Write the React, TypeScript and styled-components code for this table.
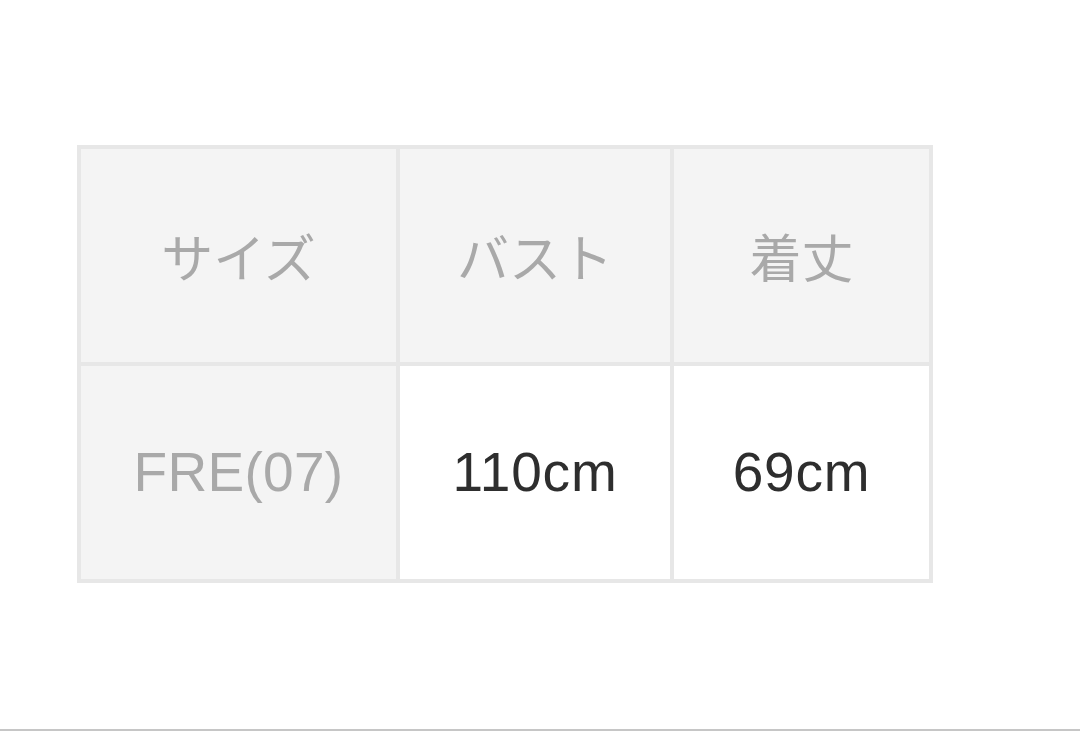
import React from "react";
import styled, { createGlobalStyle } from "styled-components";

const Global = createGlobalStyle`
  html, body { margin: 0; padding: 0; background: #fff; }
  body { font-family: "Liberation Sans", "Noto Sans CJK JP", sans-serif; }
`;

const Page = styled.div`
  box-sizing: border-box;
  height: 731px;
  padding: 145px 0 0 77px;
  border-bottom: 2px solid #c6c6c6;
`;

const Table = styled.div`
  display: grid;
  grid-template-columns: 315px 270px 255px;
  grid-template-rows: 213px 213px;
  gap: 4px;
  padding: 4px;
  width: max-content;
  background: #e7e7e7;
`;

const Cell = styled.div<{ $head?: boolean; $muted?: boolean }>`
  display: flex;
  align-items: center;
  justify-content: center;
  background: ${(p) => (p.$head ? "#f4f4f4" : "#ffffff")};
  color: ${(p) => (p.$muted ? "#a9a9a9" : "#2e2e2e")};
  font-family: "Liberation Sans", "Noto Sans CJK JP", sans-serif;
  font-size: 55px;
  letter-spacing: ${(p) => (p.$muted ? "0.3px" : "0.8px")};
  line-height: 1;
`;

const JpText = styled.span`
  font-family: "Noto Sans CJK JP", sans-serif;
  font-size: 52px;
  font-weight: 400;
  letter-spacing: 0;
`;

export default function App() {
  return (
    <>
      <Global />
      <Page>
        <Table>
          <Cell $head $muted><JpText>サイズ</JpText></Cell>
          <Cell $head $muted><JpText>バスト</JpText></Cell>
          <Cell $head $muted><JpText>着丈</JpText></Cell>
          <Cell $head $muted>FRE(07)</Cell>
          <Cell>110cm</Cell>
          <Cell>69cm</Cell>
        </Table>
      </Page>
    </>
  );
}
